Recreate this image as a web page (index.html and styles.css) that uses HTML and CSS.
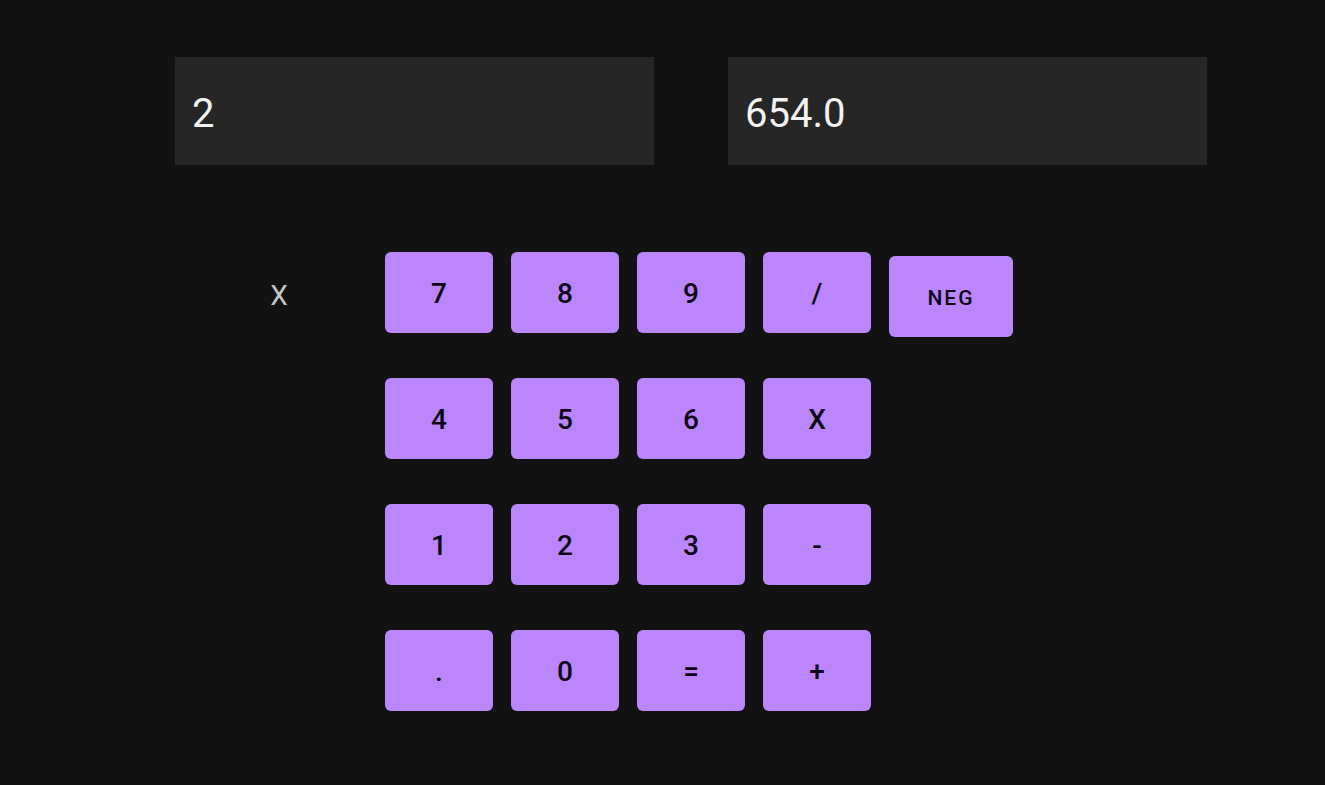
FILE: index.html
```html
<!DOCTYPE html>
<html>
<head>
<meta charset="utf-8">
<link rel="stylesheet" href="styles.css">
</head>
<body>
<div class="app">
  <div class="inputs">
    <div class="field">2</div>
    <div class="field">654.0</div>
  </div>
  <div class="pad">
    <div class="op-label">X</div>
    <div class="keys">
      <div class="key">7</div>
      <div class="key">8</div>
      <div class="key">9</div>
      <div class="key">/</div>
      <div class="key neg">NEG</div>
      <div class="key">4</div>
      <div class="key">5</div>
      <div class="key">6</div>
      <div class="key">X</div>
      <div class="spacer"></div>
      <div class="key">1</div>
      <div class="key">2</div>
      <div class="key">3</div>
      <div class="key">-</div>
      <div class="spacer"></div>
      <div class="key">.</div>
      <div class="key">0</div>
      <div class="key">=</div>
      <div class="key">+</div>
    </div>
  </div>
</div>
</body>
</html>
```

FILE: styles.css
```css
html, body {
  margin: 0;
  padding: 0;
  background: #121212;
  width: 1325px;
  height: 785px;
  overflow: hidden;
  font-family: Roboto, "Liberation Sans", sans-serif;
}
.app {
  padding-top: 57px;
  padding-left: 175px;
}
.inputs {
  display: flex;
  gap: 74px;
}
.field {
  width: 479px;
  height: 108px;
  box-sizing: border-box;
  background: #262626;
  color: #f2f2f2;
  font-size: 40px;
  padding-left: 17px;
  padding-top: 4px;
  display: flex;
  align-items: center;
}
.pad {
  display: flex;
  margin-top: 87px;
  align-items: flex-start;
}
.op-label {
  width: 208px;
  height: 81px;
  display: flex;
  align-items: center;
  justify-content: center;
  color: #c6c6c6;
  font-size: 28px;
  padding-top: 5px;
  box-sizing: border-box;
}
.keys {
  margin-left: 2px;
  display: grid;
  grid-template-columns: 108px 108px 108px 108px 124px;
  grid-auto-rows: 81px;
  column-gap: 18px;
  row-gap: 45px;
}
.key {
  background: #bb86fc;
  border-radius: 6px;
  color: #0d0416;
  font-weight: 500;
  font-size: 28px;
  display: flex;
  align-items: center;
  justify-content: center;
  padding-top: 2px;
  box-sizing: border-box;
}
.neg {
  margin-top: 4px;
  height: 81px;
  font-size: 21px;
  letter-spacing: 2px;
  padding-top: 2px;
}
```
